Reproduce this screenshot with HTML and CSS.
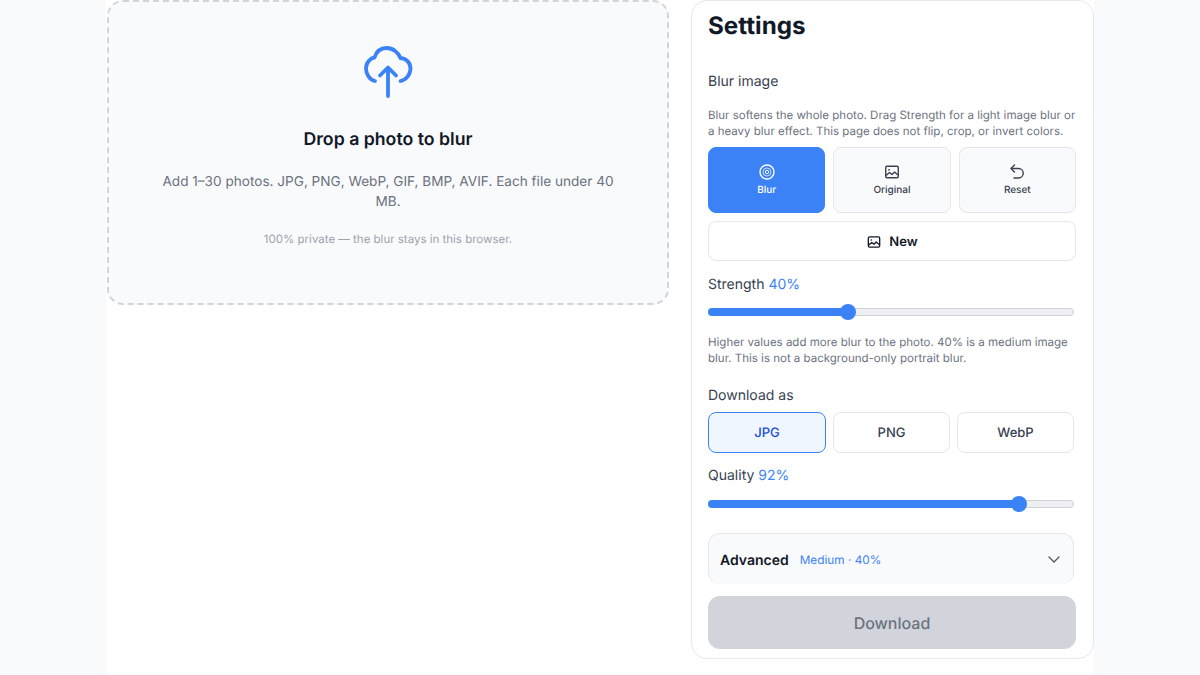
FILE: index.html
```html
<!DOCTYPE html>
<html lang="en">
<head>
<meta charset="utf-8">
<title>Blur image</title>
<link rel="stylesheet" href="styles.css">
</head>
<body>
<main class="page">
  <section class="drop">
    <svg class="cloud" width="56" height="56" viewBox="0 0 56 56" fill="none" stroke="#3b82f6" stroke-width="3.800" stroke-linecap="round" stroke-linejoin="round">
      <path d="M15 37C9.500 36 6 30 6 24.500 6 18.500 10.500 14 14.500 13.500 16.500 7.500 21 4 26.500 4 33 4 38.500 8.500 40.500 14 46.500 14.500 50.500 19 50.500 24.500 50.500 30.500 46 36 40.500 37"/>
      <path d="M28 52V25"/>
      <path d="M20 31.500 28 23.500l8 8"/>
    </svg>
    <h2 class="drop-title">Drop a photo to blur</h2>
    <p class="drop-text">Add 1–30 photos. JPG, PNG, WebP, GIF, BMP, AVIF. Each file under 40 MB.</p>
    <p class="drop-note">100% private — the blur stays in this browser.</p>
  </section>

  <aside class="panel">
    <h1 class="panel-title">Settings</h1>
    <div class="label label-blur">Blur image</div>
    <p class="hint hint-blur">Blur softens the whole photo. Drag Strength for a light image blur or a heavy blur effect. This page does not flip, crop, or invert colors.</p>

    <div class="modes">
      <button class="mode mode-on">
        <svg width="16" height="16" viewBox="0 0 16 16" fill="none" stroke="#fff"><circle cx="8" cy="8" r="7" stroke-width="1.400"/><circle cx="8" cy="8" r="4" stroke-width="1" opacity=".7"/><circle cx="8" cy="8" r="1.700" stroke-width="1"/></svg>
        <span>Blur</span>
      </button>
      <button class="mode">
        <svg width="16" height="16" viewBox="0 0 16 16" fill="none" stroke="#374151" stroke-width="1.400" stroke-linejoin="round"><rect x="1.700" y="2.200" width="12.600" height="11.600" rx="1.500"/><circle cx="5" cy="5.800" r=".9" fill="#374151" stroke="none"/><path d="M2 11.500 5.500 8.500l2.500 2 2.500-2.500 3.500 3"/></svg>
        <span>Original</span>
      </button>
      <button class="mode">
        <svg width="16" height="16" viewBox="0 0 16 16" fill="none" stroke="#374151" stroke-width="1.400" stroke-linecap="round" stroke-linejoin="round"><path d="M5.500 1 2 4.500 5.500 8"/><path d="M2.500 4.500H9.500a4.500 4.500 0 0 1 0 9.500H5"/></svg>
        <span>Reset</span>
      </button>
    </div>

    <button class="new">
      <svg width="14" height="14" viewBox="0 0 16 16" fill="none" stroke="#111827" stroke-width="1.500" stroke-linejoin="round"><rect x="1.500" y="2.200" width="13" height="11.600" rx="1.500"/><circle cx="5" cy="5.800" r=".9" fill="#111827" stroke="none"/><path d="M2 11.500 5.500 8.500l2.500 2 2.500-2.500 3.500 3"/></svg>
      <span>New</span>
    </button>

    <div class="label label-strength">Strength <span class="val">40%</span></div>
    <div class="slider slider-strength"><div class="fill fill-40"></div><div class="thumb thumb-40"></div></div>
    <p class="hint hint-strength">Higher values add more blur to the photo. 40% is a medium image blur. This is not a background-only portrait blur.</p>

    <div class="label label-download">Download as</div>
    <div class="formats">
      <button class="format format-on">JPG</button>
      <button class="format">PNG</button>
      <button class="format">WebP</button>
    </div>

    <div class="label label-quality">Quality <span class="val">92%</span></div>
    <div class="slider slider-quality"><div class="fill fill-92"></div><div class="thumb thumb-92"></div></div>

    <div class="advanced">
      <span class="adv-title">Advanced</span>
      <span class="adv-val">Medium · 40%</span>
      <svg class="chev" width="14" height="14" viewBox="0 0 14 14" fill="none" stroke="#4b5563" stroke-width="1.300" stroke-linecap="round" stroke-linejoin="round"><path d="M2 4l5 5 5-5"/></svg>
    </div>

    <button class="download">Download</button>
  </aside>
</main>
</body>
</html>
```

FILE: styles.css
```css
* { box-sizing: border-box; }
html, body { margin: 0; height: 675px; overflow: hidden; }
body { background: #f9fafc; font-family: Inter, "Liberation Sans", sans-serif; color: #111827; text-rendering: geometricPrecision; }
button { font-family: inherit; cursor: pointer; text-rendering: geometricPrecision; }
h1, h2, p { margin: 0; }

.page {
  width: 988px;
  height: 675px;
  margin-left: 106px;
  background: #fff;
  display: flex;
  align-items: flex-start;
  gap: 22px;
  padding-left: 1px;
}

.drop {
  width: 562px;
  height: 305px;
  flex: none;
  background: #f9fafb;
  border: 2px dashed #d1d5db;
  border-radius: 16px;
  display: flex;
  flex-direction: column;
  align-items: center;
  padding: 42px 32px 0;
  text-align: center;
}
.cloud { display: block; }
.drop-title { margin-top: 28px; font-size: 17.700px; line-height: 24px; font-weight: 600; }
.drop-text { margin-top: 20px; width: 470px; font-size: 13.600px; line-height: 20px; color: #6b7280; }
.drop-note { margin-top: 19px; font-size: 11.500px; line-height: 16px; color: #9ca3af; }

.panel {
  width: 403px;
  height: 659px;
  flex: none;
  background: #fff;
  border: 1px solid #e5e7eb;
  border-radius: 16px;
  padding: 10px 16px 0;
}
.panel-title { font-size: 24.200px; line-height: 30px; font-weight: 700; }

.label { font-size: 14px; line-height: 20px; font-weight: 400; color: #374151; }
.val { color: #3b82f6; }
.hint { font-size: 11.500px; line-height: 16px; color: #6b7280; }
.label-blur { margin-top: 31px; }
.hint-blur { margin-top: 15px; }

.modes { display: flex; gap: 8px; margin-top: 8px; width: 368px; }
.mode {
  flex: 1 1 0;
  height: 66px;
  background: #f9fafb;
  border: 1px solid #e5e7eb;
  border-radius: 8px;
  display: flex;
  flex-direction: column;
  align-items: center;
  justify-content: center;
  gap: 3px;
  padding: 0;
  font-size: 10px;
  line-height: 14px;
  font-weight: 500;
  color: #374151;
}
.mode-on { background: #3b82f6; border-color: #3b82f6; color: #fff; }

.new {
  display: flex;
  align-items: center;
  justify-content: center;
  gap: 8px;
  width: 368px;
  height: 40px;
  margin-top: 8px;
  padding: 1px 0 0 1px;
  background: #fff;
  border: 1px solid #e5e7eb;
  border-radius: 8px;
  font-size: 13px;
  font-weight: 600;
  color: #111827;
}

.label-strength { margin-top: 14px; }
.slider { position: relative; width: 366px; height: 8px; background: #eeeff1; border: 1px solid #cfd2d6; border-radius: 4px; }
.slider-strength { margin-top: 13px; }
.fill { height: 8px; margin: -1px; background: #3b82f6; border-radius: 4px; }
.fill-40 { width: 140px; }
.fill-92 { width: 312px; }
.thumb { position: absolute; top: -5px; width: 16px; height: 16px; border-radius: 50%; background: #3b82f6; }
.thumb-40 { left: 131px; }
.thumb-92 { left: 302px; }
.hint-strength { margin-top: 18px; }

.label-download { margin-top: 20px; }
.formats { display: flex; gap: 7px; margin-top: 6px; width: 366px; }
.format {
  flex: 1 1 0;
  height: 41px;
  background: #fff;
  border: 1px solid #e5e7eb;
  border-radius: 8px;
  font-size: 13px;
  font-weight: 500;
  color: #374151;
}
.format-on { flex: 0 0 118px; background: #eff6ff; border-color: #3b82f6; color: #1d4ed8; }

.label-quality { margin-top: 13px; }
.slider-quality { margin-top: 14px; }

.advanced {
  display: flex;
  align-items: center;
  width: 366px;
  height: 51px;
  margin-top: 25px;
  padding: 2px 12px 0 11px;
  background: #f9fafb;
  border: 1px solid #e5e7eb;
  border-bottom: 0;
  border-radius: 12px;
}
.adv-title { font-size: 14px; font-weight: 600; color: #111827; }
.adv-val { margin-left: 11px; font-size: 11.800px; color: #3b82f6; }
.chev { margin-left: auto; }

.download {
  display: block;
  width: 368px;
  height: 53px;
  margin-top: 12px;
  background: #d1d5db;
  border: 0;
  border-radius: 12px;
  font-size: 16px;
  font-weight: 500;
  color: #6b7280;
}
```
